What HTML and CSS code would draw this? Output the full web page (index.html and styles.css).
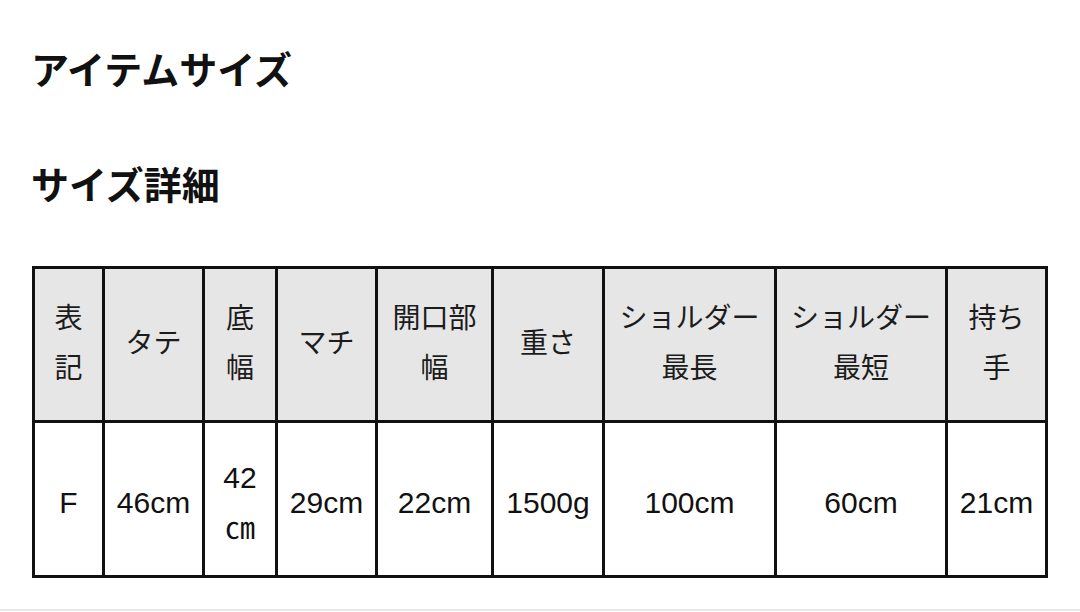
FILE: index.html
```html
<!DOCTYPE html>
<html lang="ja">
<head>
<meta charset="utf-8">
<title>アイテムサイズ</title>
<link rel="stylesheet" href="styles.css">
</head>
<body>
<div class="page">
  <h1 class="title">アイテムサイズ</h1>
  <h2 class="subtitle">サイズ詳細</h2>
  <table class="size-table">
    <colgroup>
      <col class="c1"><col class="c2"><col class="c3"><col class="c4"><col class="c5"><col class="c6"><col class="c7"><col class="c8"><col class="c9">
    </colgroup>
    <thead>
      <tr>
        <th>表記</th>
        <th>タテ</th>
        <th>底幅</th>
        <th>マチ</th>
        <th>開口部幅</th>
        <th>重さ</th>
        <th>ショルダー最長</th>
        <th>ショルダー最短</th>
        <th>持ち手</th>
      </tr>
    </thead>
    <tbody>
      <tr>
        <td>F</td>
        <td>46cm</td>
        <td>42㎝</td>
        <td>29cm</td>
        <td>22cm</td>
        <td>1500g</td>
        <td>100cm</td>
        <td>60cm</td>
        <td>21cm</td>
      </tr>
    </tbody>
  </table>
</div>
<div class="footer-line"></div>
</body>
</html>
```

FILE: styles.css
```css
html, body {
  margin: 0;
  padding: 0;
  background: #ffffff;
}

body {
  width: 1080px;
  height: 612px;
  overflow: hidden;
  font-family: "Liberation Sans", "Noto Sans CJK JP", sans-serif;
  color: #111111;
}

.page {
  padding: 49px 0 0 32px;
  height: 558px;
  box-sizing: border-box;
}

.title,
.subtitle {
  margin: 0;
  font-family: "Noto Sans CJK JP", sans-serif;
  font-weight: 700;
  font-size: 38px;
  line-height: 38px;
  color: #111111;
}

.title {
  margin-left: -1px;
}

.subtitle {
  margin-top: 77px;
  margin-left: -1px;
}

.size-table {
  margin-top: 64px;
  table-layout: fixed;
  width: 1016px;
  border-collapse: separate;
  border-spacing: 0;
  border-top: 3px solid #111111;
  border-left: 3px solid #111111;
}

.c1 { width: 70px; }
.c2 { width: 100px; }
.c3 { width: 73px; }
.c4 { width: 100px; }
.c5 { width: 116px; }
.c6 { width: 111px; }
.c7 { width: 172px; }
.c8 { width: 171px; }
.c9 { width: 100px; }

.size-table th,
.size-table td {
  border-right: 3px solid #111111;
  border-bottom: 3px solid #111111;
  padding: 25px 10px 26px;
  font-size: 28px;
  line-height: 50px;
  font-weight: 400;
  text-align: center;
  vertical-align: middle;
  word-break: break-all;
}

.size-table th {
  background: #e6e6e6;
  color: #1c1c1c;
}

.size-table td {
  padding: 30px 6px 22px;
  font-size: 30px;
  background: #ffffff;
  color: #111111;
}

.footer-line {
  height: 1px;
  border-top: 2px solid #e8e8e8;
  margin-top: 51px;
}
```
